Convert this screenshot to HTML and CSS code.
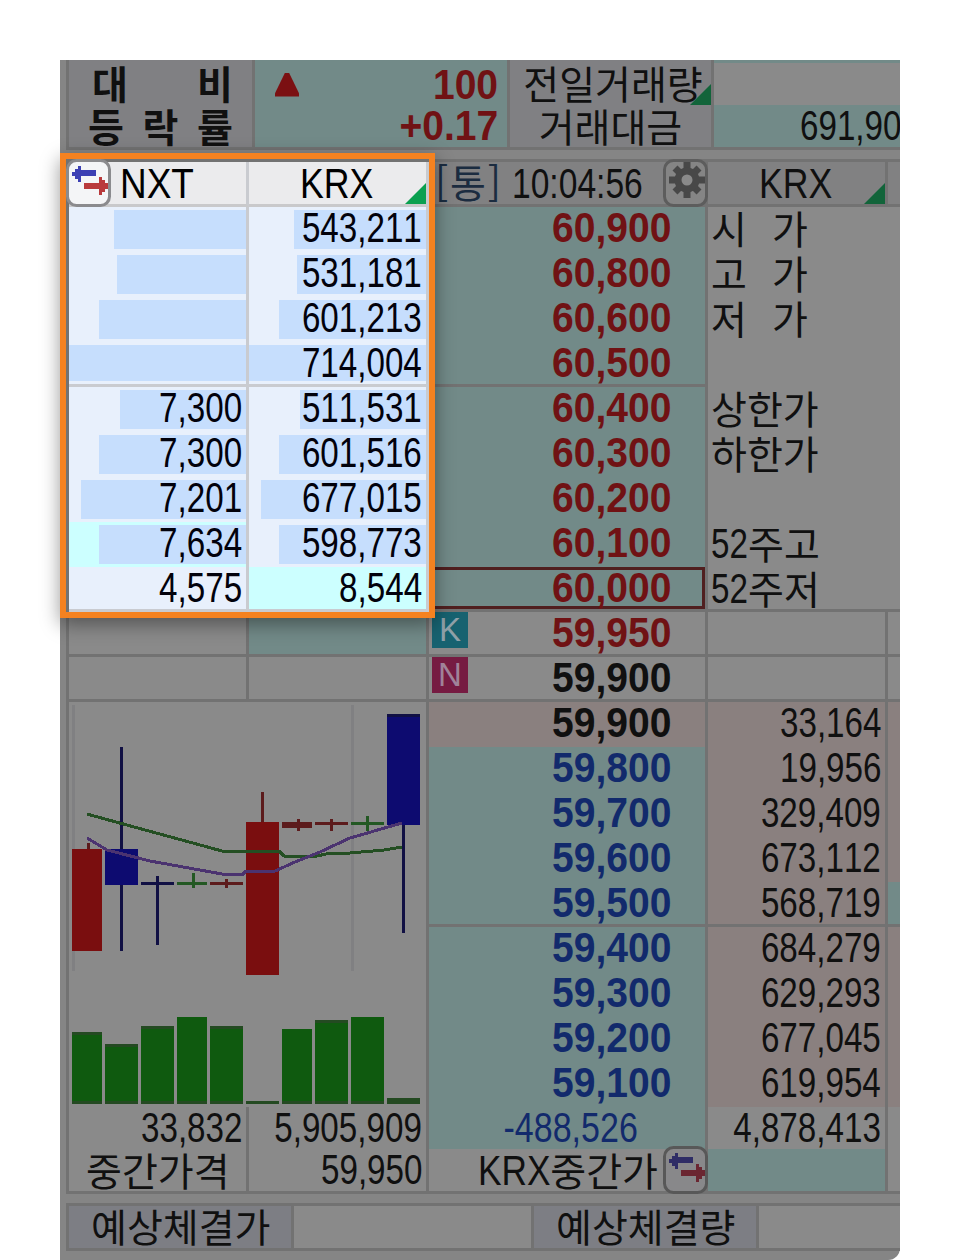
FILE: index.html
```
<!DOCTYPE html>
<html lang="ko">
<head>
    <meta charset="UTF-8">
    <title>호가창</title>
    <link rel="stylesheet" href="styles.css">
</head>
<body>
    <div class="panel">
        <div class="summary">
            <div class="label sum-name">
                <div class="row spread"><b>대</b><b>비</b></div>
                <div class="row spread three"><b>등</b><b>락</b><b>률</b></div>
            </div>
            <div class="sum-diff teal">
                <div class="row"><i class="up"></i><b class="num bold red">100</b></div>
                <div class="row"><b class="num bold red">+0.17</b></div>
            </div>
            <div class="label sum-title">
                <div class="row">전일거래량<i class="corner"></i></div>
                <div class="row">거래대금</div>
            </div>
            <div class="sum-value">
                <div class="row"></div>
                <div class="row teal"><span class="num">691,90</span></div>
            </div>
        </div>

        <div class="board">
            <div class="left">
                <div class="quotes">
                    <div class="col">
                        <div class="head bright"><span class="latin nxt">NXT</span>
                            <svg class="btn-icon swap" viewBox="0 0 45 48">
                                <rect class="face" x="1.5" y="1.5" width="42" height="45" rx="9"/>
                                <path class="to-left" d="M6 13h3v-3h3V7h3v4h15v6H15v6h-3v-3H9v-3H6z"/>
                                <path class="to-right" d="M18 24h15v-6h3v3h3v3h3v6h-3v3h-3v3h-3v-6H18z"/>
                            </svg>
                        </div>
                        <div class="cell"><i class="bar" style="width:132px"></i></div>
                        <div class="cell"><i class="bar" style="width:129px"></i></div>
                        <div class="cell"><i class="bar" style="width:147px"></i></div>
                        <div class="cell line"><i class="bar" style="width:177px"></i></div>
                        <div class="cell"><i class="bar" style="width:126px"></i><span class="num">7,300</span></div>
                        <div class="cell"><i class="bar" style="width:147px"></i><span class="num">7,300</span></div>
                        <div class="cell"><i class="bar" style="width:165px"></i><span class="num">7,201</span></div>
                        <div class="cell hot"><i class="bar" style="width:147px"></i><span class="num">7,634</span></div>
                        <div class="cell line"><span class="num">4,575</span></div>
                        <div class="cell dim line"></div>
                        <div class="cell dim line"></div>
                    </div>
                    <div class="col">
                        <div class="head bright"><span class="latin krx">KRX</span><i class="corner"></i></div>
                        <div class="cell"><i class="bar" style="width:132px"></i><span class="num">543,211</span></div>
                        <div class="cell"><i class="bar" style="width:129px"></i><span class="num">531,181</span></div>
                        <div class="cell"><i class="bar" style="width:147px"></i><span class="num">601,213</span></div>
                        <div class="cell line"><i class="bar" style="width:177px"></i><span class="num">714,004</span></div>
                        <div class="cell"><i class="bar" style="width:126px"></i><span class="num">511,531</span></div>
                        <div class="cell"><i class="bar" style="width:147px"></i><span class="num">601,516</span></div>
                        <div class="cell"><i class="bar" style="width:165px"></i><span class="num">677,015</span></div>
                        <div class="cell"><i class="bar" style="width:147px"></i><span class="num">598,773</span></div>
                        <div class="cell hot line"><span class="num">8,544</span></div>
                        <div class="cell dim teal line"></div>
                        <div class="cell dim line"></div>
                    </div>
                </div>
                <svg class="chart" viewBox="69 702 357 405" shape-rendering="crispEdges">
                    <path class="guide" d="M72 705h3v266h-3zM351 705h3v266h-3z"/>
                    <!-- candles -->
                    <path class="c-red" d="M72 849h30v102H72zM246 822h33v153h-33z"/>
                    <path class="c-red-d" d="M87 843h3v6h-3zM210 882h33v3h-33zM225 879h3v9h-3zM261 792h3v30h-3zM282 822h30v6h-30zM297 819h3v12h-3zM315 822h33v3h-33zM330 819h3v12h-3z"/>
                    <path class="c-blue" d="M105 849h33v36h-33zM387 714h33v111h-33z"/>
                    <path class="c-blue-d" d="M120 747h3v102h-3zM120 885h3v66h-3zM141 882h33v3h-33zM156 876h3v69h-3zM402 825h3v108h-3zM387 714h33v3h-33z"/>
                    <path class="c-green-d" d="M177 882h30v3h-30zM192 873h3v15h-3zM351 822h33v3h-33zM366 816h3v15h-3z"/>
                    <!-- moving averages -->
                    <polyline class="ma green" points="87,814 105,819 222,851 279,851 284,856 313,857 330,853 350,853 384,850 402,847"/>
                    <polyline class="ma purple" points="87,838 107,850 150,861 222,874 243,874 246,871 275,871 295,862 320,852 350,838 402,823"/>
                    <!-- volume -->
                    <path class="vol" d="M72 1032h30v72H72zM105 1044h33v60h-33zM141 1026h33v78h-33zM177 1017h30v87h-30zM210 1026h33v78h-33zM246 1101h33v3h-33zM282 1029h30v75h-30zM315 1020h33v84h-33zM351 1017h33v87h-33zM387 1098h33v6h-33z"/>
                    <path class="vol-d" d="M72 1032h30v3H72zM105 1044h33v3h-33zM141 1026h33v3h-33zM210 1026h33v3h-33zM246 1101h33v3h-33zM315 1020h33v3h-33zM387 1098h33v6h-33zM72 1101h30v3H72zM105 1101h33v3h-33zM141 1101h33v3h-33zM177 1101h30v3h-30zM210 1101h33v3h-33zM282 1101h30v3h-30zM315 1101h33v3h-33zM351 1101h33v3h-33z"/>
                </svg>
                <div class="totals">
                    <div class="col">
                        <div class="cell dim sum"><span class="num">33,832</span></div>
                        <div class="cell dim last mid">중간가격</div>
                    </div>
                    <div class="col">
                        <div class="cell dim sum"><span class="num">5,905,909</span></div>
                        <div class="cell dim last"><span class="num">59,950</span></div>
                    </div>
                </div>
            </div>

            <div class="price">
                <div class="head"><span class="tong"><span>[</span>통<span>]</span></span><span class="num time">10:04:56</span>
                    <svg class="btn-icon gear" viewBox="0 0 45 48">
                        <rect class="face" x="1.5" y="1.5" width="42" height="45" rx="9"/>
                        <path class="teeth" d="M24 3v36M6 21h36M12 9l24 24M36 9L12 33"/>
                        <circle class="ring" cx="24" cy="21" r="9"/>
                    </svg>
                </div>
                <div class="cell teal"><b class="num bold red">60,900</b></div>
                <div class="cell teal"><b class="num bold red">60,800</b></div>
                <div class="cell teal"><b class="num bold red">60,600</b></div>
                <div class="cell teal line"><b class="num bold red">60,500</b></div>
                <div class="cell teal"><b class="num bold red">60,400</b></div>
                <div class="cell teal"><b class="num bold red">60,300</b></div>
                <div class="cell teal"><b class="num bold red">60,200</b></div>
                <div class="cell teal"><b class="num bold red">60,100</b></div>
                <div class="cell teal line now"><b class="num bold red">60,000</b></div>
                <div class="cell line"><span class="badge k">K</span><b class="num bold red">59,950</b></div>
                <div class="cell line"><span class="badge n">N</span><b class="num bold">59,900</b></div>
                <div class="cell pink"><b class="num bold">59,900</b></div>
                <div class="cell teal"><b class="num bold blue">59,800</b></div>
                <div class="cell teal"><b class="num bold blue">59,700</b></div>
                <div class="cell teal"><b class="num bold blue">59,600</b></div>
                <div class="cell teal line"><b class="num bold blue">59,500</b></div>
                <div class="cell teal"><b class="num bold blue">59,400</b></div>
                <div class="cell teal"><b class="num bold blue">59,300</b></div>
                <div class="cell teal"><b class="num bold blue">59,200</b></div>
                <div class="cell teal"><b class="num bold blue">59,100</b></div>
                <div class="cell teal sum net"><span class="num blue">-488,526</span></div>
                <div class="cell last mid"><span class="latin">KRX</span>중간가
                    <svg class="btn-icon swap dark" viewBox="0 0 45 48">
                        <rect class="face" x="1.5" y="1.5" width="42" height="45" rx="9"/>
                        <path class="to-left" d="M6 13h3v-3h3V7h3v4h15v6H15v6h-3v-3H9v-3H6z"/>
                        <path class="to-right" d="M18 24h15v-6h3v3h3v3h3v6h-3v3h-3v3h-3v-6H18z"/>
                    </svg>
                </div>
            </div>

            <div class="info">
                <div class="head"><span class="latin krx">KRX</span><i class="corner"></i></div>
                <div class="cell name two"><span>시</span><span>가</span></div>
                <div class="cell name two"><span>고</span><span>가</span></div>
                <div class="cell name two"><span>저</span><span>가</span></div>
                <div class="cell"></div>
                <div class="cell name">상한가</div>
                <div class="cell name">하한가</div>
                <div class="cell"></div>
                <div class="cell name"><span class="num">52</span>주고</div>
                <div class="cell name line"><span class="num">52</span>주저</div>
                <div class="cell edge line"></div>
                <div class="cell edge line"></div>
                <div class="cell edge pink"><span class="num">33,164</span></div>
                <div class="cell edge pink"><span class="num">19,956</span></div>
                <div class="cell edge pink"><span class="num">329,409</span></div>
                <div class="cell edge pink"><span class="num">673,112</span></div>
                <div class="cell edge pink line"><span class="num">568,719</span></div>
                <div class="cell edge pink"><span class="num">684,279</span></div>
                <div class="cell edge pink"><span class="num">629,293</span></div>
                <div class="cell edge pink"><span class="num">677,045</span></div>
                <div class="cell edge pink"><span class="num">619,954</span></div>
                <div class="cell edge sum"><span class="num">4,878,413</span></div>
                <div class="cell edge teal last"></div>
            </div>

            <div class="rest">
                <div class="head"></div>
                <div class="blank line"></div>
                <div class="cell line"></div>
                <div class="cell line"></div>
                <div class="cell pink"></div>
                <div class="cell pink"></div>
                <div class="cell pink"></div>
                <div class="cell pink"></div>
                <div class="cell teal line"></div>
                <div class="cell pink"></div>
                <div class="cell pink"></div>
                <div class="cell pink"></div>
                <div class="cell pink"></div>
            </div>
            <div class="focus"></div>
        </div>

        <div class="expect">
            <div class="label">예상체결가</div>
            <div class="value first"></div>
            <div class="label">예상체결량</div>
            <div class="value"></div>
        </div>
    </div>
</body>
</html>
```
FILE: styles.css
```
*{
    margin: 0;
    padding: 0;
    box-sizing: border-box;
}
body{
    background-color: #ffffff;
    padding: 60px;
    height: 1260px;
    overflow: hidden;
}
.panel{
    width: 840px;
    height: 1200px;
    background-color: #858585;
    border-radius: 0 12px 12px 0;
    padding-left: 6px;
    font: 39px/38px "Noto Sans CJK KR", sans-serif;
    font-kerning: none;
    color: #101010;
    white-space: nowrap;
}
svg{
    display: block;
}

/* text */
.num,.latin{
    display: inline-block;
    font-family: "Liberation Sans", sans-serif;
    font-size: 42px;
    line-height: 42px;
    transform: scaleX(0.79);
    transform-origin: right;
    position: relative;
}
.latin{
    transform: scaleX(0.84);
    transform-origin: left;
}
.bold{
    transform: scaleX(0.93);
}
.red{
    color: #701214;
}
.blue{
    color: #122a6c;
}

/* backgrounds */
.teal{
    background-color: #728a88;
}
.pink{
    background-color: #8a807f;
}
.label{
    background-color: #808083;
}

/* top summary */
.summary{
    display: flex;
    height: 90px;
    border-left: 3px solid #727272;
    border-bottom: 3px solid #727272;
}
.summary .row{
    display: flex;
    height: 45px;
    align-items: center;
    justify-content: flex-end;
    position: relative;
}
.summary .row:last-child{
    height: 42px;
}
.sum-name{
    width: 186px;
    border-right: 3px solid #727272;
}
.sum-name .spread{
    justify-content: space-between;
    padding: 0 19px 1px 23px;
}
.sum-name .three{
    padding: 0 19px 3px 19px;
}
.sum-diff{
    width: 252px;
    padding-right: 9px;
}
.sum-diff .row:first-child{
    justify-content: space-between;
    padding: 4px 0 0 20px;
}
.up{
    width: 24px;
    height: 24px;
    background-color: #7b1012;
    clip-path: polygon(42% 0, 58% 0, 100% 86%, 100% 100%, 0 100%, 0 86%);
}
.label.sum-title{
    width: 207px;
    border-left: 3px solid #727272;
    border-right: 3px solid #727272;
}
.sum-title .row{
    justify-content: center;
    padding: 0 0 1px 5px;
}
.sum-title .row:last-child{
    padding: 0 0 3px;
}
.sum-value{
    flex: 1;
    border-top: 3px solid #728a88;
    background-color: #8a8a8a;
    overflow: hidden;
}
.sum-value .row:first-child{
    height: 42px;
}
.sum-value .num{
    margin-right: -1px;
}
.corner{
    position: absolute;
    right: 0;
    bottom: 0;
    width: 21px;
    height: 21px;
    background-color: #12643a;
    clip-path: polygon(100% 0, 100% 100%, 0 100%);
}

/* order board */
.board{
    display: flex;
    position: relative;
    margin-top: 9px;
    height: 1035px;
    border-top: 3px solid #727272;
    border-left: 3px solid #727272;
    border-bottom: 3px solid #727272;
    background-color: #8a8a8a;
}
.head{
    position: relative;
    display: flex;
    align-items: center;
    height: 45px;
    background-color: #818182;
    border-bottom: 3px solid #727272;
}
.head .num,.head .latin{
    top: 1px;
}
.bright{
    background-color: #ebebed;
    border-color: #c9c9cb;
    color: #000000;
}
.bright .corner{
    background-color: #0aa050;
}
.cell{
    position: relative;
    display: flex;
    align-items: center;
    justify-content: flex-end;
    height: 45px;
    padding: 0 4px 3px 0;
}
.cell.line{
    border-bottom: 3px solid #727272;
    padding-bottom: 0;
}
.blank.line{
    border-bottom: 3px solid #727272;
}
.quotes,.totals{
    display: flex;
}
.quotes .col,.totals .col{
    width: 180px;
}
.quotes .cell,.quotes .head{
    border-right: 3px solid #c9cbd0;
}
.quotes .cell{
    background-color: #e8f0fc;
    border-bottom-color: #c9cbd0;
    color: #02020c;
}
.quotes .cell.hot{
    background-color: #ccffff;
}
.quotes .cell.dim{
    border-color: #727272;
    background-color: #8a8a8a;
}
.quotes .cell.teal{
    background-color: #728a88;
}
.bar{
    position: absolute;
    right: 0;
    top: 3px;
    bottom: 3px;
    background-color: #c6defd;
}
.latin.nxt{
    margin-left: 51px;
    transform: scaleX(0.88);
}
.latin.krx{
    margin-left: 51px;
    transform: scaleX(0.85);
}
.totals .cell{
    border-right: 3px solid #727272;
}
.cell.sum{
    height: 42px;
    padding-bottom: 0;
}
.cell.last{
    height: 42px;
    padding-bottom: 0;
}
.cell.mid{
    justify-content: flex-start;
    padding: 0 0 3px 17px;
}
.chart{
    width: 360px;
    height: 405px;
    padding-right: 3px;
    background: linear-gradient(#727272, #727272) right / 3px 100% no-repeat;
}

/* chart */
.guide{
    fill: #808082;
}
.c-red{
    fill: #7a0e0f;
}
.c-red-d{
    fill: #5c1b1c;
}
.c-blue{
    fill: #0d0b70;
}
.c-blue-d{
    fill: #111044;
}
.c-green-d{
    fill: #235823;
}
.ma{
    fill: none;
    stroke-width: 3;
}
.ma.green{
    stroke: #244f23;
}
.ma.purple{
    stroke: #4b3370;
}
.vol{
    fill: #0f5a0f;
}
.vol-d{
    fill: #244a22;
}

/* price column */
.price{
    width: 279px;
    border-right: 3px solid #727272;
}
.price .cell{
    padding-right: 34px;
}
.price .cell.now::before{
    content: "";
    position: absolute;
    left: 0;
    top: 0;
    right: 0;
    bottom: 0;
    border: 3px solid #501f1f;
}
.price .cell.net{
    padding-right: 67px;
}
.price .net .num{
    transform: scaleX(0.81);
}
.price .cell.mid{
    padding: 0 0 3px 49px;
}
.price .mid .latin{
    margin-right: -14px;
    top: 2px;
}
.tong{
    display: flex;
    width: 66px;
    margin: 0 11px 4px 6px;
    justify-content: space-between;
    color: #1b2c40;
}
.price .time{
    transform: scaleX(0.8);
    transform-origin: left;
}
.badge{
    position: absolute;
    left: 3px;
    top: 0;
    width: 36px;
    height: 36px;
    font: 33px/36px "Liberation Sans", sans-serif;
    text-align: center;
    color: #8fa0a8;
}
.badge.k{
    background-color: #176270;
}
.badge.n{
    background-color: #761b42;
    color: #a08299;
}
.btn-icon{
    position: absolute;
    width: 45px;
    height: 48px;
    z-index: 2;
}
.quotes .swap{
    left: -3px;
    top: -3px;
}
.gear{
    right: -3px;
    top: -3px;
}
.dark{
    right: -3px;
    top: -3px;
}
.face{
    fill: #f4f5f7;
    stroke: #8b8b8e;
    stroke-width: 3;
}
.to-left{
    fill: #3c40b4;
}
.to-right{
    fill: #b93a3c;
}
.gear .face{
    fill: #858585;
    stroke: #5d5d5d;
}
.teeth{
    stroke: #484848;
    stroke-width: 7;
}
.ring{
    fill: #8a8a8a;
    stroke: #484848;
    stroke-width: 7;
}
.dark .face{
    fill: #88888a;
    stroke: #585858;
}
.dark .to-left{
    fill: #2f2d66;
}
.dark .to-right{
    fill: #6b2631;
}

/* right columns */
.info{
    width: 180px;
}
.info .head,.info .edge{
    border-right: 3px solid #727272;
}
.info .cell.name{
    justify-content: flex-start;
    padding: 0 0 6px 3px;
}
.info .cell.name.line{
    padding-bottom: 3px;
}
.info .two{
    gap: 25px;
}
.name .num{
    width: 37px;
    top: 2px;
    transform-origin: left;
}
.rest{
    flex: 1;
}
.blank{
    height: 405px;
}

/* frame around the NXT / KRX asks */
.focus{
    position: absolute;
    left: -9px;
    top: -9px;
    width: 375px;
    height: 465px;
    border: 6px solid #f58220;
    box-shadow: 0 6px 18px rgba(0, 0, 0, 0.4);
    z-index: 3;
}

/* expected price and volume */
.expect{
    display: flex;
    margin-top: 9px;
    height: 48px;
    border: 3px solid #727272;
    border-right: 0;
}
.expect .label{
    width: 225px;
    padding-left: 22px;
    border-right: 3px solid #727272;
    background-color: #7d7e84;
}
.expect .value{
    flex: 1;
    background-color: #8a8a8a;
}
.expect .first{
    flex: none;
    width: 240px;
    border-right: 3px solid #727272;
}
```
